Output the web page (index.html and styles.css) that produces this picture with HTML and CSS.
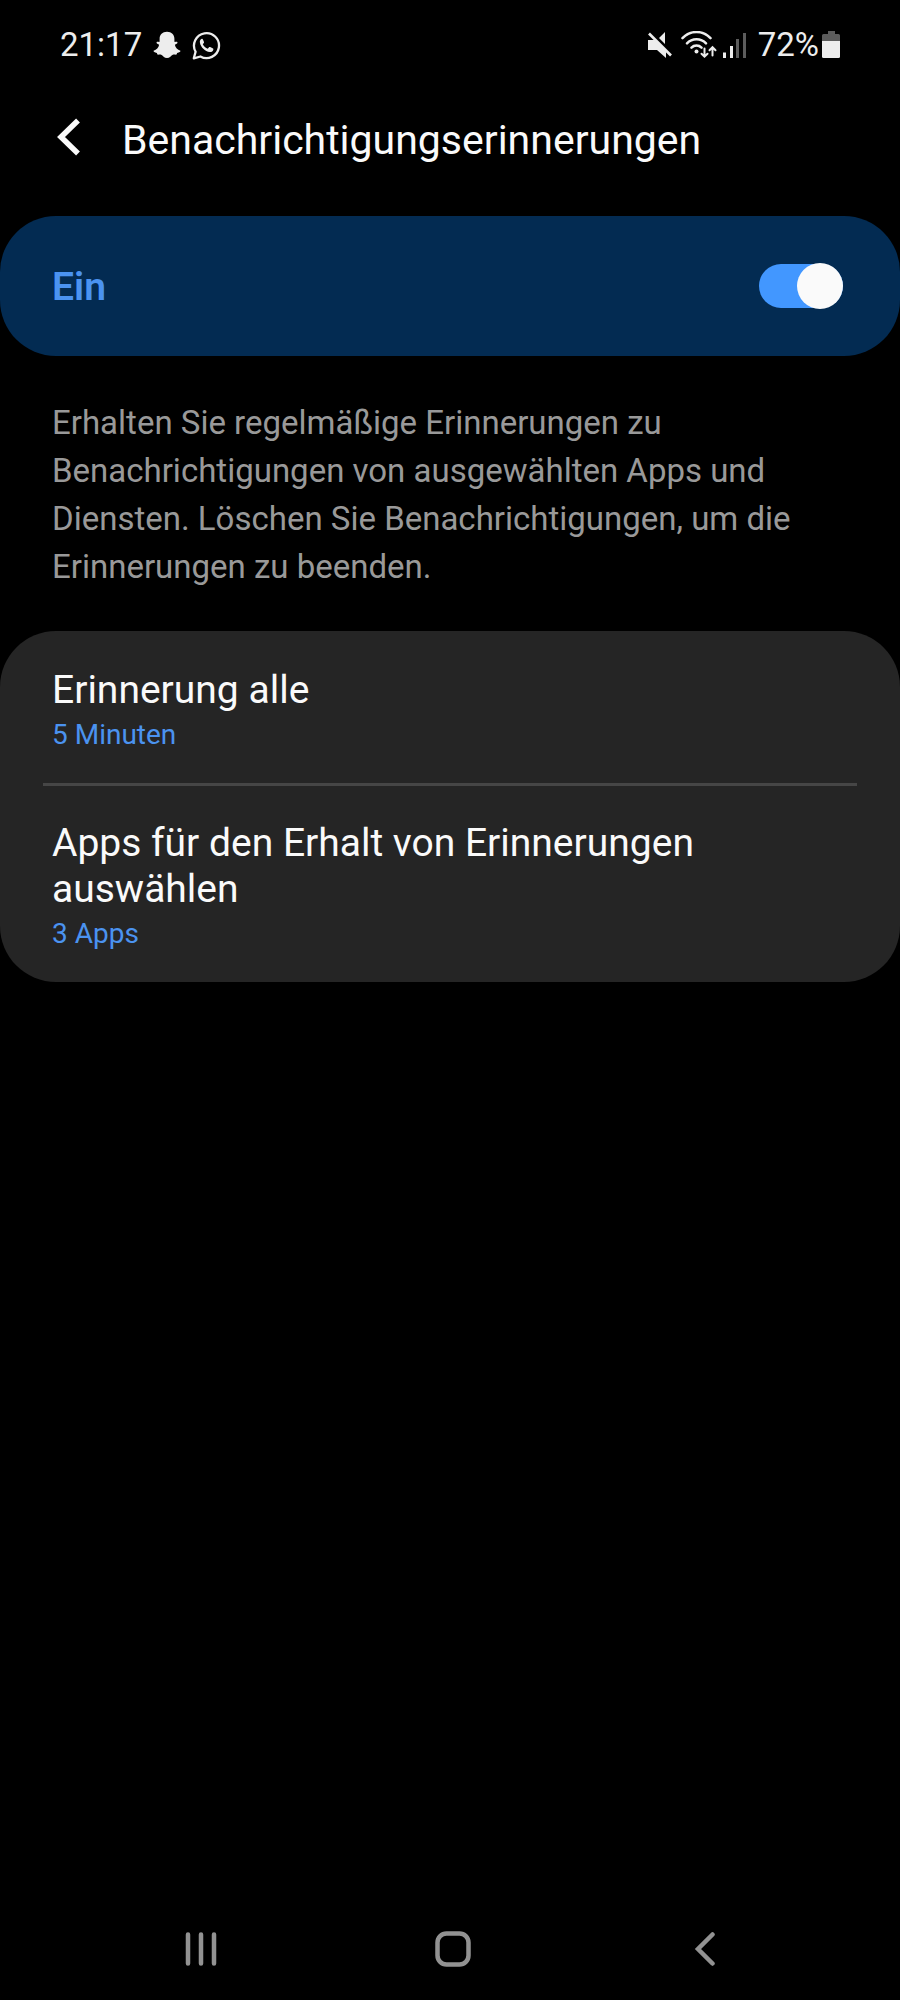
FILE: index.html
```html
<!DOCTYPE html>
<html lang="de">
<head>
    <meta charset="UTF-8">
    <meta name="viewport" content="width=device-width, initial-scale=1.0">
    <title>Benachrichtigungserinnerungen</title>
    <link rel="stylesheet" href="styles.css">
</head>
<body>
    <div class="status-bar">
        <span class="status-text">21:17</span>
        <svg class="icon-snap" width="28" height="28" viewBox="0 0 28 28" fill="currentColor" aria-hidden="true">
            <path d="M14 .8c-4.6 0-7.4 3-7.4 7v3c-.8.5-2-.5-2.900.3-.7.8.5 2 2.400 2.700-.4 3-2.600 5.100-5.500 6-.6.8 1.100 1.700 3.300 2.100.3.5.2 1.500.8 1.700 1 .2 2.200-.2 3.500.2 1.600.7 3 3.300 5.800 3.300s4.200-2.600 5.800-3.300c1.300-.4 2.500 0 3.500-.2.6-.2.5-1.200.8-1.700 2.200-.4 3.900-1.300 3.300-2.100-2.900-.9-5.100-3-5.500-6 1.900-.7 3.100-1.900 2.400-2.700-.9-.8-2.100.2-2.900-.3v-3c0-4-2.800-7-7.400-7z"/>
        </svg>
        <svg class="icon-whatsapp" width="29" height="29" viewBox="0 0 29 29" fill="none" aria-hidden="true">
            <path d="M1.800 27.300l1.800-6.600a12.500 12.500 0 1 1 4.800 4.800z" stroke="currentColor" stroke-width="2.300" stroke-linejoin="round"/>
            <path d="M9.900 7.800c-1.500.4-2.300 2-2 3.800.6 4.600 5.200 9 9.900 9.500 1.700.1 3.200-.8 3.500-2.300.2-.9 0-1.200-.7-1.500l-2.500-1.200c-.6-.2-.9-.1-1.300.4l-1 1.300c-2.200-.9-3.900-2.500-5-4.600l1-1.300c.3-.4.3-.7.1-1.200l-1-2.300c-.2-.5-.5-.7-1-.600z" fill="currentColor"/>
        </svg>

        <div class="status-right">
            <svg class="icon-mute" width="25" height="28" viewBox="0 0 25 28" aria-hidden="true">
                <path d="M1 9h7l11 11v7l-9-8H1zM18 1v12l-6-6z" fill="currentColor"/>
                <path d="M2 2.500l22 22" stroke="currentColor" stroke-width="2.600"/>
            </svg>
            <svg class="icon-wifi" width="36" height="28" viewBox="0 0 36 28" fill="none" stroke="currentColor" stroke-linecap="round" aria-hidden="true">
                <path d="M1.500 7.200c7.500-8.200 20.500-8.200 28 0M6 12.300c5-5.500 14-5.500 19 0M10.500 16.700c2.700-2.800 7.300-2.800 10 0" stroke-width="2.500"/>
                <circle cx="15.500" cy="20.500" r="2" fill="currentColor" stroke="none"/>
                <path d="M23.500 17.500v8M20.500 22.700l3 3 3-3M31.500 24.500v-8M28.500 19.200l3-3 3 3" stroke-width="2"/>
            </svg>
            <svg class="icon-signal" width="24" height="27" viewBox="0 0 24 27" fill="currentColor" aria-hidden="true">
                <path d="M0 20.500h3V26H0zM7 14h3v12H7z"/>
                <path d="M13 7h3v19h-3zM20 1h3v25h-3z" fill="#5c5c5c"/>
            </svg>
            <span class="status-text">72%</span>
            <svg class="icon-battery" width="18" height="28" viewBox="0 0 18 28" aria-hidden="true">
                <path d="M6 0h7v3h3.500A1.500 1.500 0 0 1 18 4.500V11H0V4.500A1.500 1.500 0 0 1 1.500 3H6z" fill="#5c5c5c"/>
                <path d="M0 10h18v15.500a1.500 1.500 0 0 1-1.500 1.500h-15A1.500 1.500 0 0 1 0 25.500z" fill="currentColor"/>
            </svg>
        </div>
    </div>

    <header class="app-bar">
        <button class="back-button" type="button" aria-label="Zurück">
            <svg width="26" height="38" viewBox="0 0 26 38" fill="none" aria-hidden="true">
                <path d="M22 2.500L5 19l17 16.500" stroke="currentColor" stroke-width="5.500"/>
            </svg>
        </button>
        <h1 class="title">Benachrichtigungserinnerungen</h1>
    </header>

    <main>
        <div class="switch-card">
            <label class="switch-label" for="reminders">Ein</label>
            <input class="switch" type="checkbox" role="switch" id="reminders" checked>
        </div>

        <p class="description">Erhalten Sie regelmäßige Erinnerungen zu Benachrichtigungen von ausgewählten Apps und Diensten. Löschen Sie Benachrichtigungen, um die Erinnerungen zu beenden.</p>

        <div class="list-card">
            <button class="list-item" type="button">
                <span class="item-title">Erinnerung alle</span>
                <span class="item-value">5 Minuten</span>
            </button>
            <hr class="divider">
            <button class="list-item" type="button">
                <span class="item-title">Apps für den Erhalt von Erinnerungen auswählen</span>
                <span class="item-value">3 Apps</span>
            </button>
        </div>
    </main>

    <nav class="nav-bar">
        <button class="nav-button" type="button" aria-label="Letzte Apps">
            <svg width="32" height="34" viewBox="0 0 32 34" fill="none" stroke="currentColor" stroke-width="4.500" stroke-linecap="round" aria-hidden="true">
                <path d="M3 2.500v29M16 2.500v29M29 2.500v29"/>
            </svg>
        </button>
        <button class="nav-button" type="button" aria-label="Startseite">
            <svg width="36" height="36" viewBox="0 0 36 36" fill="none" stroke="currentColor" stroke-width="4.500" aria-hidden="true">
                <rect x="2.500" y="2.500" width="31" height="31" rx="9"/>
            </svg>
        </button>
        <button class="nav-button" type="button" aria-label="Zurück">
            <svg width="22" height="34" viewBox="0 0 22 34" fill="none" stroke="currentColor" stroke-width="4.500" stroke-linecap="round" aria-hidden="true">
                <path d="M18.500 2.500L4 17l14.500 14.500"/>
            </svg>
        </button>
    </nav>
</body>
</html>
```
FILE: styles.css
```css
:root {
    --background: #000;
    --foreground: #fafafa;
    --status: #ededed;
    --muted: #999;
    --card: #252525;
    --card-active: #032b52;
    --primary: #4297ff;
    --link: #4b93f0;
    --border: #464646;
}

* {
    box-sizing: border-box;
}

body {
    display: flex;
    flex-direction: column;
    min-height: 100vh;
    margin: 0;
    background: var(--background);
    color: var(--foreground);
    font-family: Roboto, sans-serif;
}

button {
    padding: 0;
    border: none;
    background: none;
    color: inherit;
    font: inherit;
    cursor: pointer;
}

svg {
    display: block;
    flex-shrink: 0;
}

/* Status bar */
.status-bar {
    display: flex;
    align-items: center;
    height: 90px;
    padding: 0 60px;
    color: var(--status);
}

.status-text {
    font-size: 33px;
    line-height: 40px;
}

.icon-snap {
    margin-left: 11px;
}

.icon-whatsapp {
    margin-left: 11px;
}

.status-right {
    display: flex;
    align-items: center;
    margin-left: auto;
}

.icon-wifi {
    margin-left: 9px;
}

.icon-signal {
    margin-left: 6px;
}

.icon-signal + .status-text {
    margin-left: 11px;
}

.icon-battery {
    margin-left: 3px;
}

/* Header */
.app-bar {
    display: flex;
    align-items: center;
    height: 94px;
    margin-bottom: 32px;
    padding: 0 56px;
}

.back-button {
    display: flex;
    width: 66px;
}

.title {
    margin: 0;
    padding-top: 6px;
    font-size: 41px;
    font-weight: 400;
    line-height: 48px;
}

/* On / off card */
.switch-card {
    display: flex;
    align-items: center;
    justify-content: space-between;
    height: 140px;
    padding: 0 57px 0 52px;
    border-radius: 56px;
    background: var(--card-active);
}

.switch-label {
    padding-top: 2px;
    color: var(--link);
    font-size: 39px;
    font-weight: 600;
    line-height: 46px;
}

.switch {
    appearance: none;
    display: flex;
    align-items: center;
    width: 84px;
    height: 44px;
    margin: 0;
    border-radius: 22px;
    background: #555;
    cursor: pointer;
}

.switch::before {
    content: "";
    flex-shrink: 0;
    width: 46px;
    height: 46px;
    border-radius: 50%;
    background: var(--foreground);
}

.switch:checked {
    justify-content: flex-end;
    background: var(--primary);
}

.description {
    margin: 0;
    padding: 43px 92px 40px 52px;
    color: var(--muted);
    font-size: 33px;
    line-height: 48px;
}

/* Settings list */
.list-card {
    border-radius: 56px;
    background: var(--card);
    overflow: hidden;
}

.list-item {
    display: flex;
    flex-direction: column;
    gap: 2px;
    width: 100%;
    padding: 36px 52px 28px;
    text-align: left;
}

.item-title {
    font-size: 39px;
    line-height: 46px;
}

.item-value {
    color: var(--link);
    font-size: 28px;
    line-height: 40px;
}

.divider {
    height: 3px;
    margin: 0 43px;
    border: none;
    background: var(--border);
}

.divider + .list-item {
    padding-top: 34px;
}

/* System navigation */
.nav-bar {
    display: grid;
    grid-template-columns: repeat(3, 1fr);
    height: 102px;
    margin-top: auto;
    padding: 0 69px 0 75px;
    color: #929292;
}

.nav-button {
    display: flex;
    align-items: center;
    justify-content: center;
}
```
